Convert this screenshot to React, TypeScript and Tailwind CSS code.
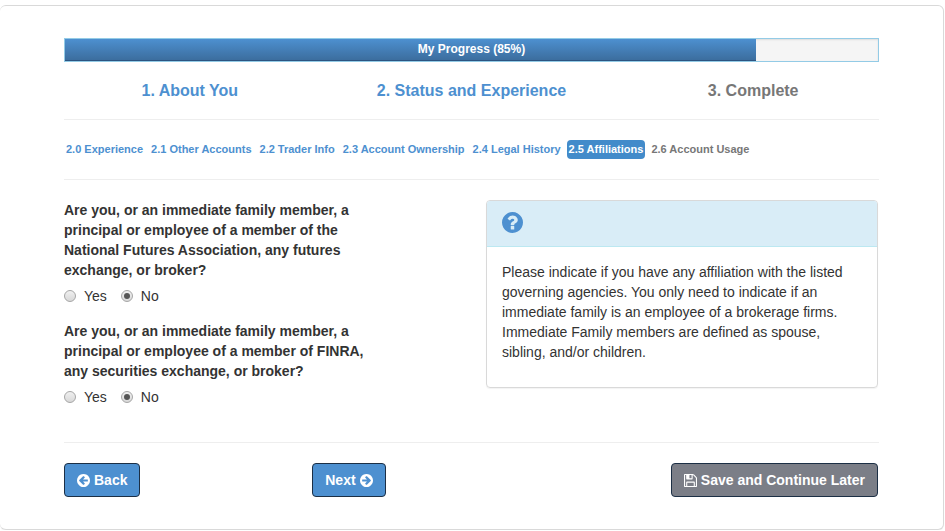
import type { ReactNode } from "react";
import { clsx } from "clsx";

const PROGRESS = 85;

const STEPS = [
  { label: "1. About You", reached: true },
  { label: "2. Status and Experience", reached: true },
  { label: "3. Complete", reached: false },
];

const SECTIONS = [
  { label: "2.0 Experience", state: "done" },
  { label: "2.1 Other Accounts", state: "done" },
  { label: "2.2 Trader Info", state: "done" },
  { label: "2.3 Account Ownership", state: "done" },
  { label: "2.4 Legal History", state: "done" },
  { label: "2.5 Affiliations", state: "current" },
  { label: "2.6 Account Usage", state: "upcoming" },
];

const DISC =
  "M1664 896q0 209-103 385.5t-279.5 279.5-385.5 103-385.5-103-279.5-279.5-103-385.5 103-385.5 279.5-279.5 385.5-103 385.5 103 279.5 279.5 103 385.5z";

function ArrowCircleIcon({ className }: { className?: string }) {
  return (
    <svg viewBox="128 128 1536 1536" fill="currentColor" aria-hidden="true" className={clsx("size-[13px]", className)}>
      <path
        fillRule="evenodd"
        d={
          "M1408 960v-128q0-26-19-45t-45-19h-502l189-189q19-19 19-45t-19-45l-91-91q-18-18-45-18t-45 18l-362 362-91 91q-18 18-18 45t18 45l91 91 362 362q18 18 45 18t45-18l91-91q18-18 18-45t-18-45l-189-189h502q26 0 45-19t19-45z" +
          DISC
        }
      />
    </svg>
  );
}

function QuestionCircleIcon() {
  return (
    <svg viewBox="128 128 1536 1536" fill="currentColor" aria-hidden="true" className="size-[21px]">
      <path
        fillRule="evenodd"
        d={
          "M1024 1376v-192q0-14-9-23t-23-9h-192q-14 0-23 9t-9 23v192q0 14 9 23t23 9h192q14 0 23-9t9-23zM1280 704q0-88-55.5-163t-138.5-116-170-41q-243 0-371 213-15 24 8 42l132 100q7 6 19 6 16 0 25-12 53-68 86-92 34-24 86-24 48 0 85.5 26t37.5 59q0 38-20 61t-68 45q-63 28-115.5 86.5t-52.5 125.5v36q0 14 9 23t23 9h192q14 0 23-9t9-23q0-19 21.5-49.5t54.5-49.5q32-18 49-28.5t46-35 44.5-48 28-60.5 12.5-81z" +
          DISC
        }
      />
    </svg>
  );
}

function FloppyIcon() {
  return (
    <svg viewBox="0 128 1536 1536" fill="currentColor" aria-hidden="true" className="size-[13px]">
      <path d="M384 1536h768v-384h-768v384zM1280 1536h128v-896q0-14-10-38.5t-20-34.5l-281-281q-10-10-34-20t-39-10v416q0 40-28 68t-68 28h-576q-40 0-68-28t-28-68v-416h-128v1280h128v-416q0-40 28-68t68-28h832q40 0 68 28t28 68v416zM896 608v-320q0-13-9.5-22.5t-22.5-9.5h-192q-13 0-22.5 9.5t-9.5 22.5v320q0 13 9.5 22.5t22.5 9.5h192q13 0 22.5-9.5t9.5-22.5zM1536 640v928q0 40-28 68t-68 28h-1344q-40 0-68-28t-28-68v-1344q0-40 28-68t68-28h928q40 0 88 20t76 48l280 280q28 28 48 76t20 88z" />
    </svg>
  );
}

function Button({ children, muted = false }: { children: ReactNode; muted?: boolean }) {
  return (
    <button
      type="button"
      className={clsx(
        "flex h-[34px] items-center gap-1 rounded border border-[#1c2f45] px-3 text-sm font-bold text-white",
        muted ? "bg-[#7b7e87]" : "bg-[#4d90d0]",
      )}
    >
      {children}
    </button>
  );
}

function Question({ name, children }: { name: string; children: ReactNode }) {
  return (
    <fieldset>
      <legend className="max-w-80 text-sm leading-5 font-bold">{children}</legend>
      <div className="mt-[6px] flex gap-[14px] text-sm leading-5">
        {["Yes", "No"].map((answer) => (
          <label key={answer} className="flex items-center gap-2">
            <input
              type="radio"
              name={name}
              value={answer}
              defaultChecked={answer === "No"}
              className="grid size-3 appearance-none place-items-center rounded-full border border-[#a6a6a6] bg-linear-to-b from-[#f0f0f0] to-[#d8d8d8] checked:before:size-[6px] checked:before:rounded-full checked:before:bg-[#555] checked:before:content-['']"
            />
            {answer}
          </label>
        ))}
      </div>
    </fieldset>
  );
}

export default function App() {
  return (
    <main className="mt-[5px] mr-px rounded-md border border-l-0 border-[#d9d9d9] bg-white px-16 py-8 font-['Liberation_Sans',Arial,sans-serif] text-[#333] shadow-[0_1px_1px_rgb(0_0_0/0.05)]">
      {/* Overall progress */}
      <div
        role="progressbar"
        aria-valuenow={PROGRESS}
        aria-valuemin={0}
        aria-valuemax={100}
        className="grid h-6 border border-[#93cbe6] bg-[#f5f5f5] shadow-[inset_0_1px_2px_rgb(0_0_0/0.1)]"
      >
        <div
          className="col-start-1 row-start-1 bg-linear-to-b from-[#4d90d0] to-[#3b6c9c] shadow-[inset_0_-1px_0_#2c5480]"
          style={{ width: `${PROGRESS}%` }}
        />
        <span className="col-start-1 row-start-1 text-center text-xs leading-5 font-bold text-white">
          My Progress ({PROGRESS}%)
        </span>
      </div>

      {/* Main steps */}
      <ol className="-mx-[15px] mt-[17px] grid grid-cols-3 text-center text-base leading-6 font-bold">
        {STEPS.map((step) => (
          <li key={step.label} className={step.reached ? "text-[#4d90d0]" : "text-[#777]"}>
            {step.label}
          </li>
        ))}
      </ol>

      <hr className="mt-4 border-[#eee]" />

      {/* Sections of the current step */}
      <nav className="my-5 flex flex-wrap gap-1 text-[11px] leading-[19px] font-bold">
        {SECTIONS.map((section) => (
          <a
            key={section.label}
            href="#"
            aria-current={section.state === "current" ? "step" : undefined}
            className={clsx(
              "rounded px-[2px]",
              section.state === "done" && "text-[#4d90d0]",
              section.state === "current" && "bg-[#428bca] text-white",
              section.state === "upcoming" && "text-[#777]",
            )}
          >
            {section.label}
          </a>
        ))}
      </nav>

      <hr className="border-[#eee]" />

      <div className="mt-5 grid grid-cols-2 gap-[30px] pr-px">
        <form className="flex flex-col gap-[15px]">
          <Question name="nfa">
            Are you, or an immediate family member, a principal or employee of a member of the National Futures
            Association, any futures exchange, or broker?
          </Question>
          <Question name="finra">
            Are you, or an immediate family member, a principal or employee of a member of FINRA, any securities
            exchange, or broker?
          </Question>
        </form>

        <aside className="self-start rounded border border-[#d9d9d9] shadow-[0_1px_1px_rgb(0_0_0/0.05)]">
          <div className="h-[46px] rounded-t-[3px] border-b border-[#bce8f1] bg-[#d9edf7] px-[15px] py-[11px] text-[#4d90d0]">
            <QuestionCircleIcon />
          </div>
          <p className="px-[15px] pt-[15px] pb-[25px] text-sm leading-5">
            Please indicate if you have any affiliation with the listed governing agencies. You only need to indicate if
            an immediate family is an employee of a brokerage firms. Immediate Family members are defined as spouse,
            sibling, and/or children.
          </p>
        </aside>
      </div>

      <hr className="mt-[35px] border-[#eee]" />

      <div className="mt-5 flex justify-between pr-px">
        <div className="flex w-2/5 justify-between pr-1">
          <Button>
            <ArrowCircleIcon />
            Back
          </Button>
          <Button>
            Next
            <ArrowCircleIcon className="rotate-180" />
          </Button>
        </div>
        <Button muted>
          <FloppyIcon />
          Save and Continue Later
        </Button>
      </div>
    </main>
  );
}
